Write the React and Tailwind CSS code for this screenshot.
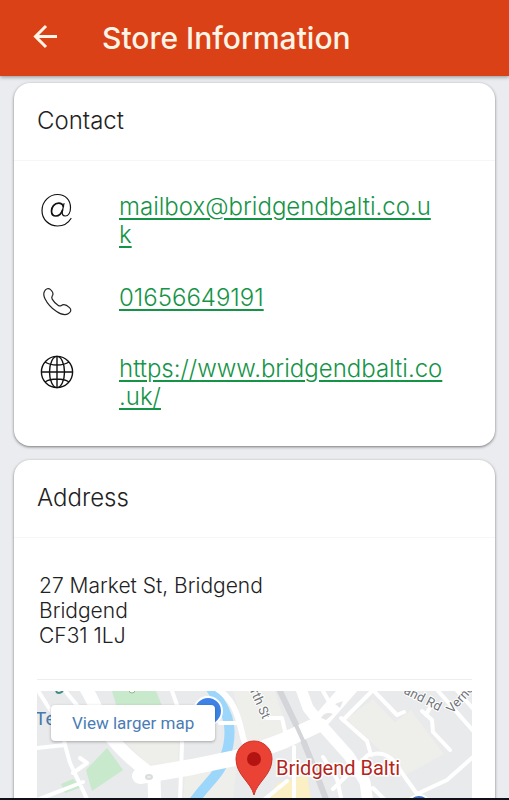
const AtIcon = () => (
  <svg viewBox="0 0 36 36" className="h-9 w-9" fill="none" stroke="#111" strokeLinecap="round" aria-hidden="true">
    <path d="M32 25.500C29 30.500 24 33 18.500 33C9.800 33 3 26.300 3 17.500C3 8.600 10.300 1.500 18.500 1.500C26.800 1.500 31.500 7.300 31.500 14.500C31.500 19.800 29.300 23 26.300 23C23.500 23 22.800 21 23.400 18.200L25 10.500" strokeWidth="1.200" />
    <path d="M24.300 13.500C23.700 11.200 21.800 10.200 19.600 10.200C15.400 10.200 12.500 14 12.500 18C12.500 21 14.200 23 16.900 23C20 23 22.500 20.300 23.500 17" strokeWidth="1.700" />
  </svg>
);

const PhoneIcon = () => (
  <svg viewBox="0 0 36 36" className="h-9 w-9" fill="none" stroke="#222" strokeWidth="1.200" strokeLinejoin="round" aria-hidden="true">
    <path d="M5.500 7.200C6.800 4.800 9.500 3.700 11.300 5.400C13.300 7.200 14.600 9.300 13.700 11.200C12.900 12.700 12.100 13.200 13.200 15.100C14.600 17.500 17 20 19.300 21.500C21.200 22.700 21.900 21.600 23.500 20.900C25.600 20 28.300 21.500 30.500 23.600C32.800 25.800 31.800 28 29.500 29.500C26.500 31.600 22.300 30.700 17.600 27.600C12.900 24.400 8.200 19.200 6 14.700C4.700 12 4.300 9.400 5.500 7.200Z" />
  </svg>
);

const GlobeIcon = () => (
  <svg viewBox="0 0 36 36" className="h-9 w-9" fill="none" stroke="#111" strokeWidth="1.400" aria-hidden="true">
    <circle cx="18" cy="17" r="15.600" />
    <ellipse cx="18" cy="17" rx="7.500" ry="15.600" />
    <path d="M18 1.400V32.600M2.400 17H33.600M6 7C12 11 24 11 30 7M6 27C12 23 24 23 30 27" />
  </svg>
);

const contacts = [
  { href: "mailto:mailbox@bridgendbalti.co.uk", lines: ["mailbox@bridgendbalti.co.u", "k"], Icon: AtIcon },
  { href: "tel:01656649191", lines: ["01656649191"], Icon: PhoneIcon },
  { href: "https://www.bridgendbalti.co.uk/", lines: ["https://www.bridgendbalti.co", ".uk/"], Icon: GlobeIcon },
];

function Card({ title, children }) {
  return (
    <section className="rounded-2xl bg-white shadow-[0_1px_3px_rgba(0,0,0,0.5)]">
      <h2 className="border-b border-[#f6f6f7] px-[23px] pt-[22px] pb-[23px] text-2xl leading-8 font-light text-[#222]">{title}</h2>
      {children}
    </section>
  );
}

function MapDrawing() {
  return (
    <svg viewBox="0 0 435 200" preserveAspectRatio="xMidYMin slice" className="block h-full w-full bg-[#e8eaeb]" aria-hidden="true">
      <g fill="#eeeeea">
        <path d="M78 16L134 14L142 52L141 72L116 78L84 48Z" />
        <path d="M336 8L358 31L374 19L407 63L369 84L337 54L309 28Z" />
        <path d="M148 80L200 72L196 110L146 112ZM196 0H238L252 45L212 58Z" />
      </g>
      <path d="M75 0H119L125 15L80 17ZM70 57L86 79L55 100L49 79ZM24 93L36 88L45 96L28 102Z" fill="#c8e9cb" />
      <path d="M241 92L270 84L276 120H220Z" fill="#fbefc4" />
      <path d="M173 -4C180 8 190 18 192 34C194 50 190 61 185 74C180 86 168 93 150 120" fill="none" stroke="#9cd6fa" strokeWidth="10" />
      <path d="M241 -4L263 42L276 74L292 116" fill="none" stroke="#d3d5d8" strokeWidth="6" />
      <g fill="none" stroke="white" strokeLinejoin="round" strokeLinecap="round">
        <g strokeWidth="4">
          <path d="M0 -2L10 14L24 35L28 54M0 57L28 54L33 72L51 110M43 67L50 72L36 82M0 109L46 91M25 -4L48 24" />
          <path d="M134 -3L140 14L145 52L143 110M183 32H203M230 27L245 27L250 49M257 56V110M223 112L250 90M286 66L300 88L305 111" />
          <path d="M306 29L336 -1L360 24L367 21M286 0L294 14L304 8M304 27L330 50L334 64C342 60 353 64 359 73L370 89L380 103L410 89L436 66M331 64L296 98M336 97L350 111" />
          <path d="M395 -7L438 42M385 20L395 29L396 41L413 59M389 24L396 11M417 -4L438 20" />
        </g>
        <path d="M177 -4C196 6 201 24 205 42C208 58 216 64 228 76" strokeWidth="6" />
        <path d="M48 -4C61 16 65 38 78 51C90 66 105 76 117 86L118 125" strokeWidth="13" />
        <path d="M103 85L155 76L203 66L246 50L280 34L314 -5" strokeWidth="16" />
        <path d="M263 -5L271 17L287 37L312 65L328 91L332 120" strokeWidth="11" />
      </g>
      <path d="M248 10L268 54L277 79" fill="none" stroke="#d3d5d8" strokeWidth="4" />
      <path d="M284 27Q288 20 296 23L289 29ZM298 13L306 10L303 17Z" fill="#e4e6e8" />
      <ellipse cx="112" cy="86" rx="3" ry="2" fill="#eee" stroke="#dadcde" strokeWidth="2" />
      <circle cx="171" cy="20" r="14" fill="#3d82e4" stroke="white" strokeWidth="2" />
      <circle cx="382" cy="116" r="12" fill="#416fc7" stroke="white" strokeWidth="2" />
      <path d="M19 0Q21 4 26 0" fill="none" stroke="#3d8b84" strokeWidth="2" />
      <circle cx="95" cy="-1" r="3" fill="white" stroke="#8cb891" />
      <g className="font-[Roboto,sans-serif] text-[13px]" fill="#6f7478" stroke="white" strokeWidth="2" paintOrder="stroke">
        <text x="213" y="0" transform="rotate(66 213 0)">rth St</text>
        <text x="366" y="2" transform="rotate(27 366 2)">and Rd</text>
        <text x="415" y="23" transform="rotate(-48 415 23)">Verno</text>
      </g>
      <text x="-2" y="34" className="font-[Roboto,sans-serif] text-[19px]" fill="#4778ae">Te</text>
      <path d="M217 104C214 91 199 84 199 68A18 18 0 0 1 235 68C235 84 220 91 217 104Z" fill="#ea4335" stroke="#cf3327" strokeWidth="1" />
      <circle cx="217" cy="68" r="7" fill="#b31412" />
      <text x="239" y="84" className="font-[Roboto,sans-serif] text-[20px]" fill="#b3261e" stroke="white" strokeWidth="3" paintOrder="stroke">Bridgend Balti</text>
    </svg>
  );
}

export default function App() {
  return (
    <div className="flex h-screen flex-col overflow-hidden bg-[#ebecf0] font-[Inter,sans-serif]">
      <header className="z-10 flex h-19 shrink-0 items-center gap-[42px] bg-[#da4116] px-8 text-white shadow-[0_1px_4px_rgba(0,0,0,0.4)]">
        <button type="button" aria-label="Back" className="h-7 w-7">
          <svg viewBox="0 0 28 28" className="h-7 w-7" fill="none" stroke="#fff4e6" strokeWidth="3" aria-hidden="true">
            <path d="M25 12.500H4M14 2L3.500 12.500L14 23" />
          </svg>
        </button>
        <h1 className="text-3xl leading-9 font-medium text-[#fff4e6]">Store Information</h1>
      </header>
      <main className="flex min-h-0 flex-1 flex-col gap-3.5 overflow-hidden px-3.5 pt-[7px] *:shrink-0">
        <Card title="Contact">
          <ul className="flex flex-col gap-[35px] pt-8 pr-[23px] pb-[35px] pl-[25px]">
            {contacts.map(({ href, lines, Icon }) => (
              <li key={href} className="flex items-start gap-11">
                <span className="shrink-0"><Icon /></span>
                <a href={href} className="min-w-0 flex-1 text-2xl leading-7 font-light text-[#159447] underline decoration-2 underline-offset-3">
                  {lines[0]}{lines[1] && <br />}{lines[1]}
                </a>
              </li>
            ))}
          </ul>
        </Card>
        <Card title="Address">
          <div className="px-[23px] pt-[35px] pb-6">
            <address className="border-b border-[#eee] pb-[31px] pl-0.5 text-[21px] leading-[25px] font-light text-[#222] not-italic">
              27 Market St, Bridgend<br />Bridgend<br />CF31 1LJ
            </address>
            <div className="relative mt-[11px] h-50 overflow-hidden">
              <MapDrawing />
              <a href="#map" className="absolute top-3.5 left-3.5 rounded-sm bg-white px-[21px] py-1.5 font-[Roboto,sans-serif] text-[17px] leading-6 text-[#4a7cb5] shadow-[0_1px_3px_rgba(0,0,0,0.3)]">View larger map</a>
            </div>
          </div>
        </Card>
      </main>
      <div className="h-0.5 shrink-0 bg-[#101018]" />
    </div>
  );
}
